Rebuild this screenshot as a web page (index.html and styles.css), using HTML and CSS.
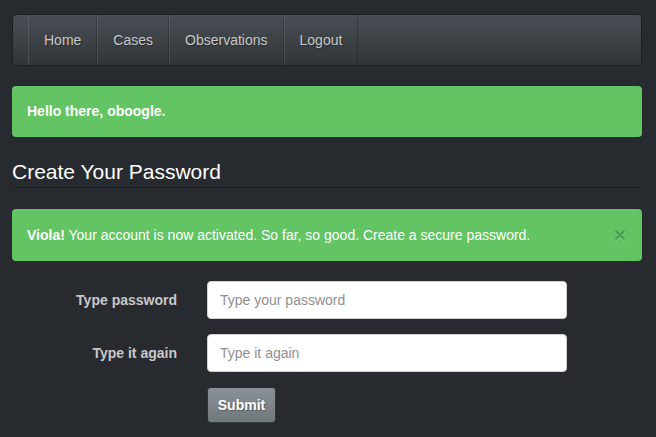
FILE: index.html
```html
<!DOCTYPE html>
<html>
<head>
<meta charset="utf-8">
<title>Create Your Password</title>
<link rel="stylesheet" href="styles.css">
</head>
<body>
<div class="container">
  <nav class="navbar">
    <ul class="nav">
      <li><a href="#">Home</a></li>
      <li><a href="#">Cases</a></li>
      <li><a href="#">Observations</a></li>
      <li><a href="#">Logout</a></li>
    </ul>
  </nav>

  <div class="alert"><strong>Hello there, oboogle.</strong></div>

  <form class="form">
    <h3 class="legend">Create Your Password</h3>
    <div class="alert alert-dismiss">
      <span><strong>Viola!</strong> Your account is now activated. So far, so good. Create a secure password.</span>
      <button type="button" class="close">&times;</button>
    </div>
    <div class="form-group">
      <label class="form-label" for="pw1">Type password</label>
      <input class="form-control" id="pw1" type="password" placeholder="Type your password">
    </div>
    <div class="form-group">
      <label class="form-label" for="pw2">Type it again</label>
      <input class="form-control" id="pw2" type="password" placeholder="Type it again">
    </div>
    <div class="form-group">
      <span class="form-label"></span>
      <button type="submit" class="btn">Submit</button>
    </div>
  </form>
</div>
</body>
</html>
```

FILE: styles.css
```css
* { box-sizing: border-box; }

html, body {
  margin: 0;
  padding: 0;
  background: #272b30;
}

body {
  font-family: "Liberation Sans", Arial, sans-serif;
  font-size: 14px;
  line-height: 20px;
  color: #c8c8c8;
}

.container {
  width: 630px;
  margin-left: 12px;
  padding-top: 14px;
}

.navbar {
  height: 52px;
  border: 1px solid #1c1e22;
  border-radius: 4px;
  background: linear-gradient(#484e55, #3a3f44 60%, #313539);
  padding-left: 15px;
  margin-bottom: 20px;
}

.nav {
  list-style: none;
  margin: 0;
  padding: 0;
  display: flex;
  height: 50px;
}

.nav a {
  display: block;
  padding: 15px;
  line-height: 20px;
  color: #c8c8c8;
  text-decoration: none;
  text-shadow: 1px 1px 1px rgba(0, 0, 0, 0.3);
  border-left: 1px solid rgba(255, 255, 255, 0.1);
  border-right: 1px solid rgba(0, 0, 0, 0.2);
}

.alert {
  background: #62c462;
  color: #fff;
  border-radius: 4px;
  padding: 15px 15px 16px;
  line-height: 20px;
  margin-bottom: 20px;
}

.alert-dismiss {
  display: flex;
  justify-content: space-between;
  align-items: center;
}

.close {
  background: none;
  border: 0;
  padding: 0;
  margin-right: 1px;
  font-family: "Liberation Sans", Arial, sans-serif;
  font-size: 21px;
  font-weight: bold;
  line-height: 1;
  color: #000;
  opacity: 0.2;
  text-shadow: 0 1px 0 #fff;
  cursor: pointer;
}

.legend {
  margin: 0 0 21px;
  font-size: 21px;
  font-weight: normal;
  line-height: 30px;
  color: #fff;
  border-bottom: 1px solid #1c1e22;
}

.form-group {
  display: flex;
  align-items: center;
  margin-bottom: 15px;
}

.form-label {
  width: 165px;
  flex: none;
  text-align: right;
  font-weight: bold;
  color: #c8c8c8;
  margin-right: 30px;
}

.form-control {
  width: 360px;
  height: 38px;
  padding: 8px 12px;
  font-family: "Liberation Sans", Arial, sans-serif;
  font-size: 14px;
  color: #272b30;
  background: #fff;
  border: 1px solid #d0d0d0;
  border-radius: 4px;
}

.form-control::placeholder {
  color: #8f8f8f;
}

.btn {
  width: 69px;
  height: 36px;
  padding: 0;
  margin: 0;
  font-family: "Liberation Sans", Arial, sans-serif;
  font-size: 14px;
  font-weight: bold;
  color: #fff;
  text-shadow: 1px 1px 1px rgba(0, 0, 0, 0.3);
  background: linear-gradient(#8a9196, #7a8288 60%, #70787d);
  border: 1px solid rgba(0, 0, 0, 0.6);
  border-radius: 4px;
  cursor: pointer;
}
```
